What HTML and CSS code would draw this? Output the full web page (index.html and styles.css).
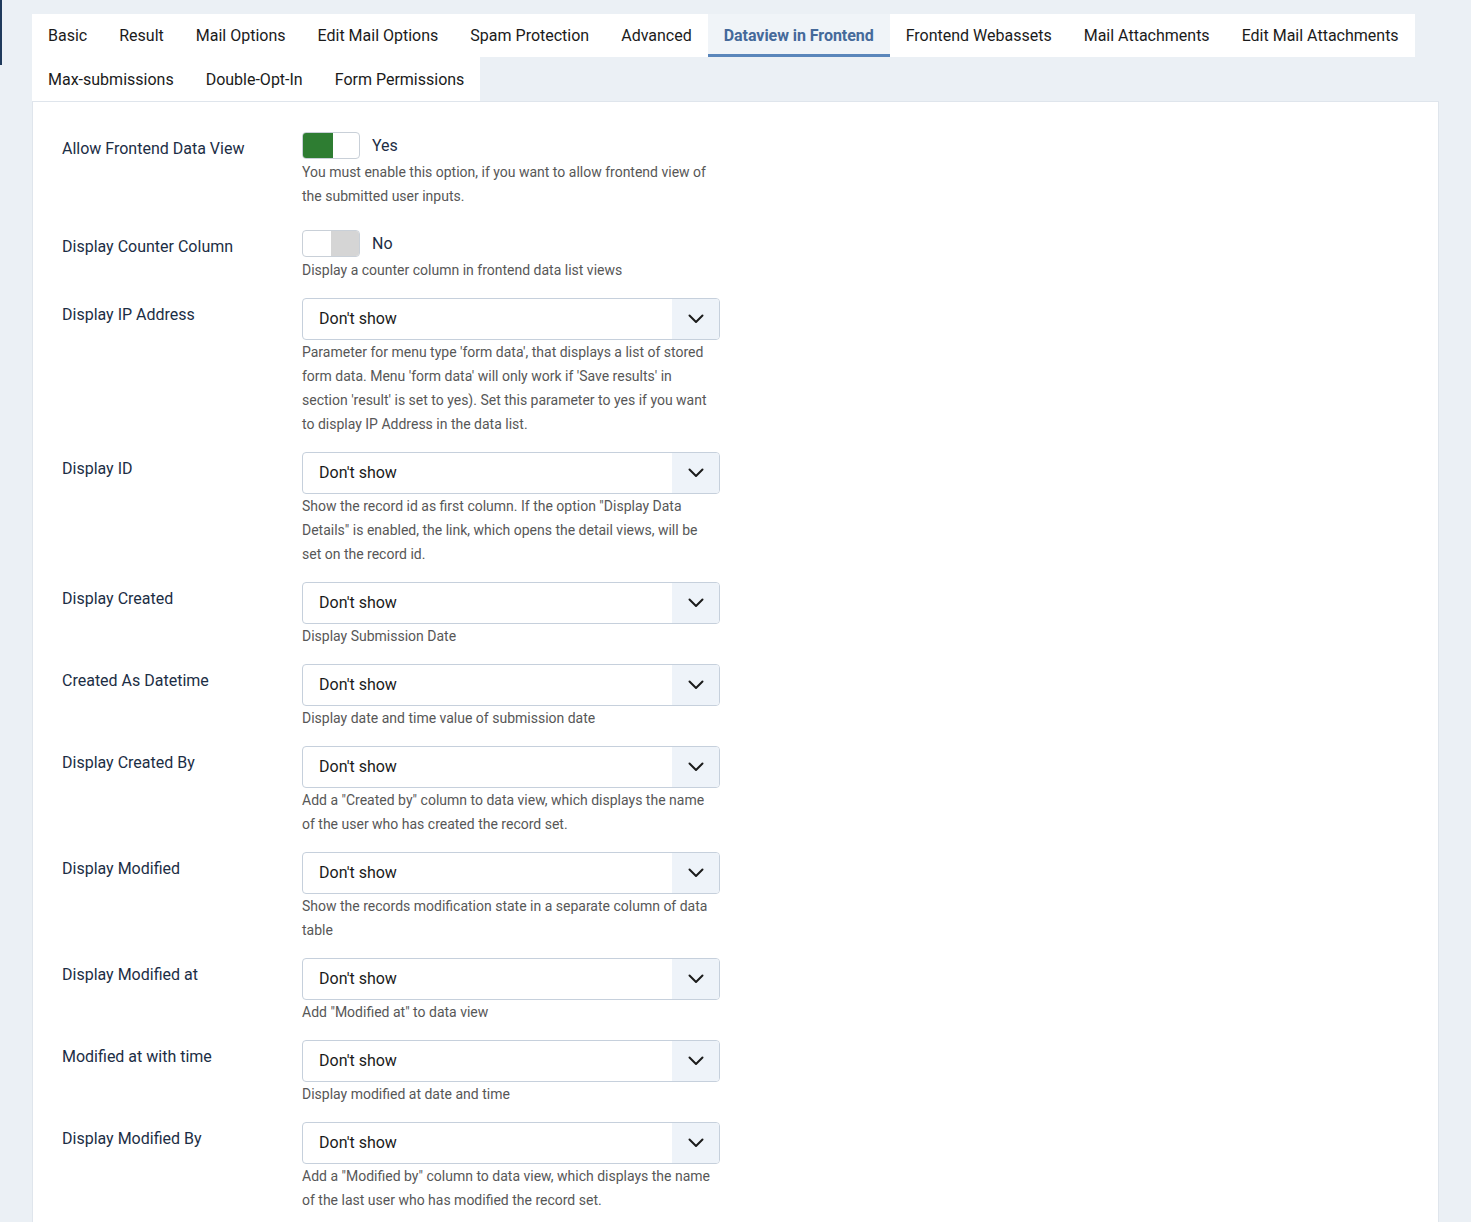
FILE: index.html
```html
<!DOCTYPE html>
<html lang="en">
<head>
<meta charset="utf-8">
<title>Dataview in Frontend</title>
<link rel="stylesheet" href="styles.css">
</head>
<body>
<div class="page">
  <div class="sidebar-edge"></div>
  <main class="main">
    <nav class="tabs">
      <span class="tab">Basic</span>
      <span class="tab">Result</span>
      <span class="tab">Mail Options</span>
      <span class="tab">Edit Mail Options</span>
      <span class="tab">Spam Protection</span>
      <span class="tab">Advanced</span>
      <span class="tab active">Dataview in Frontend</span>
      <span class="tab">Frontend Webassets</span>
      <span class="tab">Mail Attachments</span>
      <span class="tab">Edit Mail Attachments</span>
      <span class="tab">Max-submissions</span>
      <span class="tab">Double-Opt-In</span>
      <span class="tab">Form Permissions</span>
    </nav>
    <section class="card">
      <div class="row row-switch">
        <div class="label">Allow Frontend Data View</div>
        <div class="control">
          <div class="switch-line"><span class="switch on"><span class="knob"></span></span><span class="switch-text">Yes</span></div>
          <div class="desc">You must enable this option, if you want to allow frontend view of the submitted user inputs.</div>
        </div>
      </div>
      <div class="row row-switch">
        <div class="label">Display Counter Column</div>
        <div class="control">
          <div class="switch-line"><span class="switch off"><span class="knob"></span></span><span class="switch-text">No</span></div>
          <div class="desc">Display a counter column in frontend data list views</div>
        </div>
      </div>
      <div class="row">
        <div class="label">Display IP Address</div>
        <div class="control">
          <div class="select"><span class="select-value">Don't show</span><span class="select-arrow"><svg width="16" height="10" viewBox="0 0 16 10"><path d="M1.5 1.5 L8 8 L14.5 1.5" fill="none" stroke="#1b1b1b" stroke-width="2" stroke-linecap="round" stroke-linejoin="round"/></svg></span></div>
          <div class="desc">Parameter for menu type 'form data', that displays a list of stored form data. Menu 'form data' will only work if 'Save results' in section 'result' is set to yes). Set this parameter to yes if you want to display IP Address in the data list.</div>
        </div>
      </div>
      <div class="row">
        <div class="label">Display ID</div>
        <div class="control">
          <div class="select"><span class="select-value">Don't show</span><span class="select-arrow"><svg width="16" height="10" viewBox="0 0 16 10"><path d="M1.5 1.5 L8 8 L14.5 1.5" fill="none" stroke="#1b1b1b" stroke-width="2" stroke-linecap="round" stroke-linejoin="round"/></svg></span></div>
          <div class="desc">Show the record id as first column. If the option "Display Data Details" is enabled, the link, which opens the detail views, will be set on the record id.</div>
        </div>
      </div>
      <div class="row">
        <div class="label">Display Created</div>
        <div class="control">
          <div class="select"><span class="select-value">Don't show</span><span class="select-arrow"><svg width="16" height="10" viewBox="0 0 16 10"><path d="M1.5 1.5 L8 8 L14.5 1.5" fill="none" stroke="#1b1b1b" stroke-width="2" stroke-linecap="round" stroke-linejoin="round"/></svg></span></div>
          <div class="desc">Display Submission Date</div>
        </div>
      </div>
      <div class="row">
        <div class="label">Created As Datetime</div>
        <div class="control">
          <div class="select"><span class="select-value">Don't show</span><span class="select-arrow"><svg width="16" height="10" viewBox="0 0 16 10"><path d="M1.5 1.5 L8 8 L14.5 1.5" fill="none" stroke="#1b1b1b" stroke-width="2" stroke-linecap="round" stroke-linejoin="round"/></svg></span></div>
          <div class="desc">Display date and time value of submission date</div>
        </div>
      </div>
      <div class="row">
        <div class="label">Display Created By</div>
        <div class="control">
          <div class="select"><span class="select-value">Don't show</span><span class="select-arrow"><svg width="16" height="10" viewBox="0 0 16 10"><path d="M1.5 1.5 L8 8 L14.5 1.5" fill="none" stroke="#1b1b1b" stroke-width="2" stroke-linecap="round" stroke-linejoin="round"/></svg></span></div>
          <div class="desc">Add a "Created by" column to data view, which displays the name of the user who has created the record set.</div>
        </div>
      </div>
      <div class="row">
        <div class="label">Display Modified</div>
        <div class="control">
          <div class="select"><span class="select-value">Don't show</span><span class="select-arrow"><svg width="16" height="10" viewBox="0 0 16 10"><path d="M1.5 1.5 L8 8 L14.5 1.5" fill="none" stroke="#1b1b1b" stroke-width="2" stroke-linecap="round" stroke-linejoin="round"/></svg></span></div>
          <div class="desc">Show the records modification state in a separate column of data table</div>
        </div>
      </div>
      <div class="row">
        <div class="label">Display Modified at</div>
        <div class="control">
          <div class="select"><span class="select-value">Don't show</span><span class="select-arrow"><svg width="16" height="10" viewBox="0 0 16 10"><path d="M1.5 1.5 L8 8 L14.5 1.5" fill="none" stroke="#1b1b1b" stroke-width="2" stroke-linecap="round" stroke-linejoin="round"/></svg></span></div>
          <div class="desc">Add "Modified at" to data view</div>
        </div>
      </div>
      <div class="row">
        <div class="label">Modified at with time</div>
        <div class="control">
          <div class="select"><span class="select-value">Don't show</span><span class="select-arrow"><svg width="16" height="10" viewBox="0 0 16 10"><path d="M1.5 1.5 L8 8 L14.5 1.5" fill="none" stroke="#1b1b1b" stroke-width="2" stroke-linecap="round" stroke-linejoin="round"/></svg></span></div>
          <div class="desc">Display modified at date and time</div>
        </div>
      </div>
      <div class="row">
        <div class="label">Display Modified By</div>
        <div class="control">
          <div class="select"><span class="select-value">Don't show</span><span class="select-arrow"><svg width="16" height="10" viewBox="0 0 16 10"><path d="M1.5 1.5 L8 8 L14.5 1.5" fill="none" stroke="#1b1b1b" stroke-width="2" stroke-linecap="round" stroke-linejoin="round"/></svg></span></div>
          <div class="desc">Add a "Modified by" column to data view, which displays the name of the last user who has modified the record set.</div>
        </div>
      </div>
    </section>
  </main>
</div>
</body>
</html>
```

FILE: styles.css
```css
html, body {
  margin: 0;
  padding: 0;
}
body {
  background: #ebf0f5;
  font-family: Roboto, "Liberation Sans", sans-serif;
  font-size: 16px;
  line-height: 24px;
  color: #1d1d1d;
  overflow: hidden;
}
.page {
  display: flex;
  align-items: flex-start;
}
.sidebar-edge {
  width: 2px;
  height: 65px;
  background: #1f3a5c;
  flex: none;
}
.main {
  flex: 1;
  padding: 14px 32px 0 30px;
  min-width: 0;
}
.tabs {
  display: flex;
  flex-wrap: wrap;
}
.tab {
  background: #fff;
  padding: 0 16px;
  height: 43px;
  line-height: 43px;
  color: #1b1b1b;
  white-space: nowrap;
  box-sizing: border-box;
}
.tab:nth-child(n+11) {
  height: 44px;
  padding-top: 1px;
  line-height: 43px;
}
.tab.active {
  background: #f0f4f8;
  color: #45699a;
  font-weight: 700;
  letter-spacing: -0.05px;
  box-shadow: inset 0 -3px 0 #5a86bb;
}
.card {
  background: #fff;
  border: 1px solid #dfe5ec;
  border-bottom: none;
  padding: 24px 30px 40px 29px;
  min-height: 1200px;
}
.row {
  display: flex;
  margin-bottom: 16px;
}
.label {
  width: 240px;
  flex: none;
  color: #1c2e45;
  padding-top: 5px;
}
.row-switch .label {
  padding-top: 11px;
}
.control {
  width: 418px;
}
.switch-line {
  display: flex;
  padding-top: 6px;
  height: 28px;
  align-items: flex-start;
}
.switch {
  display: flex;
  width: 58px;
  height: 27px;
  box-sizing: border-box;
  border: 1px solid #c9d0d8;
  border-radius: 4px;
  overflow: hidden;
  background: #fff;
}
.switch .knob {
  width: 30px;
  height: 100%;
}
.switch.on .knob {
  background: #2e7d32;
}
.switch.off {
  justify-content: flex-end;
}
.switch.off .knob {
  width: 28px;
  background: #d5d5d5;
}
.switch-text {
  margin-left: 12px;
  line-height: 24px;
  margin-top: 2px;
  color: #1c2e45;
}
.select {
  display: flex;
  height: 42px;
  box-sizing: border-box;
  border: 1px solid #c6d0dc;
  border-radius: 4px;
  overflow: hidden;
}
.select-value {
  flex: 1;
  padding: 8px 16px;
  color: #1b1b1b;
}
.select-arrow {
  width: 47px;
  background: #eef3f9;
  display: flex;
  align-items: center;
  justify-content: center;
}
.desc {
  font-size: 14px;
  line-height: 24px;
  color: #575757;
}
```
